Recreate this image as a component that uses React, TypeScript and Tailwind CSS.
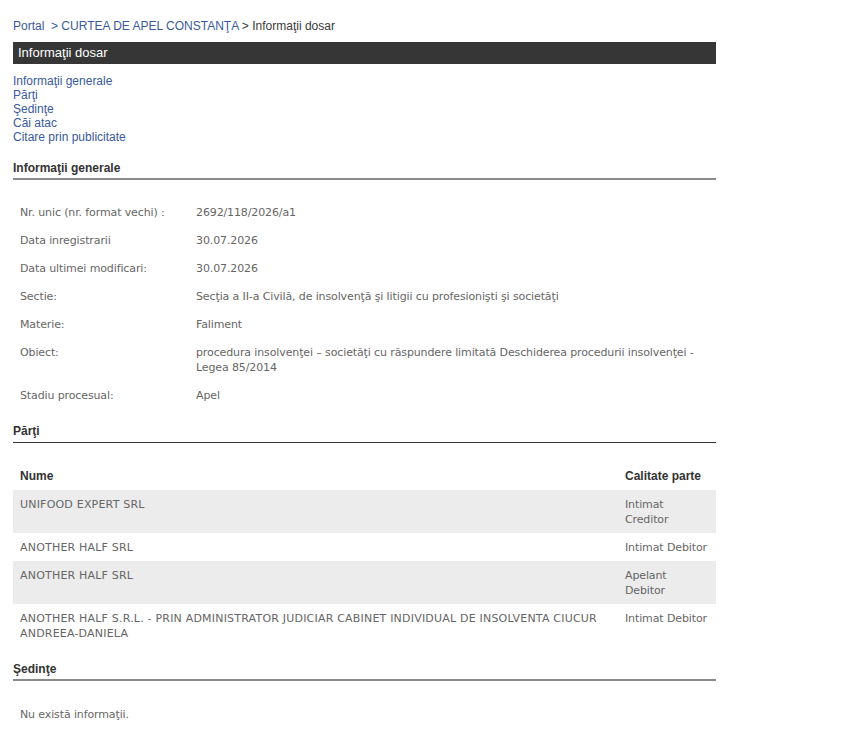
import React from "react";

const info: { label: string; value: React.ReactNode }[] = [
  { label: "Nr. unic (nr. format vechi) :", value: "2692/118/2026/a1" },
  { label: "Data inregistrarii", value: "30.07.2026" },
  { label: "Data ultimei modificari:", value: "30.07.2026" },
  {
    label: "Sectie:",
    value: "Secţia a II-a Civilă, de insolvenţă şi litigii cu profesionişti şi societăţi",
  },
  { label: "Materie:", value: "Faliment" },
  {
    label: "Obiect:",
    value: (
      <>
        procedura insolvenţei – societăţi cu răspundere limitată Deschiderea procedurii insolvenţei -
        <br />
        Legea 85/2014
      </>
    ),
  },
  { label: "Stadiu procesual:", value: "Apel" },
];

const parti: { nume: React.ReactNode; calitate: React.ReactNode }[] = [
  { nume: "UNIFOOD EXPERT SRL", calitate: (<>Intimat<br />Creditor</>) },
  { nume: "ANOTHER HALF SRL", calitate: "Intimat Debitor" },
  { nume: "ANOTHER HALF SRL", calitate: (<>Apelant<br />Debitor</>) },
  {
    nume: (
      <>
        ANOTHER HALF S.R.L. - PRIN ADMINISTRATOR JUDICIAR CABINET INDIVIDUAL DE INSOLVENTA CIUCUR
        <br />
        ANDREEA-DANIELA
      </>
    ),
    calitate: "Intimat Debitor",
  },
];

function SectionHeading({ children, dark }: { children: React.ReactNode; dark?: boolean }) {
  return (
    <div
      className={
        dark
          ? "pb-[4px] border-b border-[#333] font-bold text-[#333] text-[12px] leading-[14px]"
          : "pb-[3px] border-b-2 border-[#8a8a8a] font-bold text-[#333] text-[12px] leading-[14px]"
      }
    >
      {children}
    </div>
  );
}

const cellBase =
  "px-[7px] pt-[7px] pb-[6px] leading-[15px] text-[11px] text-[#666] font-['DejaVu_Sans',Verdana,sans-serif] whitespace-nowrap";
const dataCell = `${cellBase} tracking-[-0.12px]`;
const nameCell = `${cellBase} tracking-[0.2px]`;

export default function App() {
  return (
    <div className="min-h-screen bg-white font-['Liberation_Sans',Arial,sans-serif] text-[12px] leading-[14px] text-[#333]">
      <div className="pl-[13px] pt-[19px] w-[716px]">
        {/* Breadcrumb */}
        <div className="whitespace-pre">
          <a className="text-[#3a5a9a]">Portal</a>
          <span className="text-[#3a5a9a]">{"\u00a0 > CURTEA DE APEL CONSTANŢA"}</span>
          <span className="text-[#3a3a3a]">{" > Informaţii dosar"}</span>
        </div>

        {/* Title bar */}
        <div className="mt-[9px] h-[22px] bg-[#363636] text-white text-[13px] pl-[5px] flex items-center">
          Informaţii dosar
        </div>

        {/* Links */}
        <div className="mt-[10px] flex flex-col text-[#3a5a9a]">
          <a>Informaţii generale</a>
          <a>Părţi</a>
          <a>Şedinţe</a>
          <a>Căi atac</a>
          <a>Citare prin publicitate</a>
        </div>

        {/* Informatii generale */}
        <div className="mt-[17px]">
          <SectionHeading>Informaţii generale</SectionHeading>
        </div>
        <div className="mt-[18px] grid grid-cols-[176px_1fr]">
          {info.map((r, i) => (
            <React.Fragment key={i}>
              <div className={dataCell}>{r.label}</div>
              <div className={dataCell}>{r.value}</div>
            </React.Fragment>
          ))}
        </div>

        {/* Parti */}
        <div className="mt-[15px]">
          <SectionHeading dark>Părţi</SectionHeading>
        </div>
        <div className="mt-[19px] grid grid-cols-[605px_98px]">
          <div className="px-[7px] pt-[7px] pb-[6px] leading-[15px] font-bold text-[#333]">Nume</div>
          <div className="px-[7px] pt-[7px] pb-[6px] leading-[15px] font-bold text-[#333] whitespace-nowrap">
            Calitate parte
          </div>
          {parti.map((p, i) => (
            <React.Fragment key={i}>
              <div className={`${nameCell} ${i % 2 === 0 ? "bg-[#ececec]" : ""}`}>{p.nume}</div>
              <div className={`${dataCell} ${i % 2 === 0 ? "bg-[#ececec]" : ""}`}>{p.calitate}</div>
            </React.Fragment>
          ))}
        </div>

        {/* Sedinte */}
        <div className="mt-[15px]">
          <SectionHeading>Şedinţe</SectionHeading>
        </div>
        <div className="mt-[19px]">
          <div className={dataCell}>Nu există informaţii.</div>
        </div>
      </div>
    </div>
  );
}
